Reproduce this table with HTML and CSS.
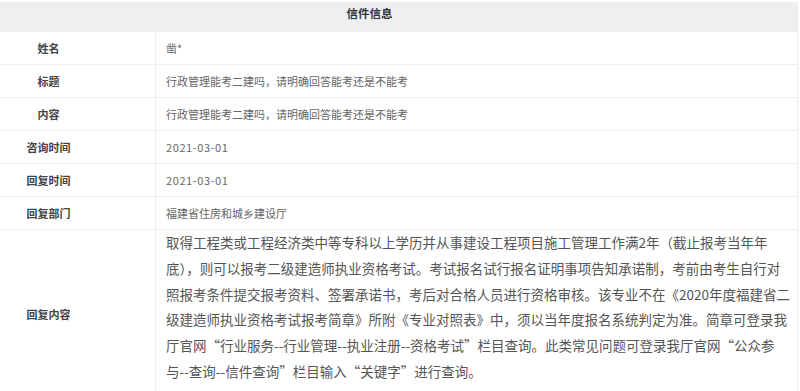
FILE: index.html
```html
<!DOCTYPE html>
<html lang="zh-CN">
<head>
<meta charset="utf-8">
<title>信件信息</title>
<link rel="stylesheet" href="styles.css">
</head>
<body>
<div class="sheet">
  <div class="head">信件信息</div>
  <div class="row"><div class="label">姓名</div><div class="value">凿*</div></div>
  <div class="row"><div class="label">标题</div><div class="value">行政管理能考二建吗，请明确回答能考还是不能考</div></div>
  <div class="row"><div class="label">内容</div><div class="value">行政管理能考二建吗，请明确回答能考还是不能考</div></div>
  <div class="row"><div class="label">咨询时间</div><div class="value date">2021-03-01</div></div>
  <div class="row"><div class="label">回复时间</div><div class="value date">2021-03-01</div></div>
  <div class="row"><div class="label">回复部门</div><div class="value">福建省住房和城乡建设厅</div></div>
  <div class="row reply"><div class="label">回复内容</div><div class="value long">取得工程类或工程经济类中等专科以上学历并从事建设工程项目施工管理工作满2年（截止报考当年年底），则可以报考二级建造师执业资格考试。考试报名试行报名证明事项告知承诺制，考前由考生自行对照报考条件提交报考资料、签署承诺书，考后对合格人员进行资格审核。该专业不在《2020年度福建省二级建造师执业资格考试报考简章》所附《专业对照表》中，须以当年度报名系统判定为准。简章可登录我厅官网“行业服务--行业管理--执业注册--资格考试”栏目查询。此类常见问题可登录我厅官网“公众参与--查询--信件查询”栏目输入“关键字”进行查询。</div></div>
</div>
</body>
</html>
```

FILE: styles.css
```css
html, body {
  margin: 0;
  padding: 0;
  background: #fff;
}
body {
  font-family: "Noto Sans CJK SC", "Noto Sans", sans-serif;
  color: #666;
  overflow: hidden;
}
.sheet {
  margin: 2px 0 0 -59px;
  width: 855px;
  border: 1px solid #ececec;
  border-bottom: none;
}
.head {
  height: 20px;
  line-height: 20px;
  padding-bottom: 8px;
  background: #efefef;
  text-align: center;
  font-size: 11.5px;
  font-weight: bold;
  color: #333;
}
.row {
  display: grid;
  grid-template-columns: 214px 1fr;
  height: 33px;
  border-top: 1px solid #ededed;
  box-sizing: border-box;
}
.label {
  display: flex;
  align-items: center;
  justify-content: center;
  font-size: 11px;
  font-weight: 600;
  color: #444;
  border-right: 1px solid #ededed;
}
.value {
  display: flex;
  align-items: center;
  padding-left: 10px;
  font-size: 11px;
  color: #666;
}
.value.date {
  letter-spacing: 0.6px;
}
.row.reply {
  height: 168px;
}
.value.long {
  display: block;
  padding: 0 6px 0 10px;
  font-size: 13.5px;
  line-height: 25.8px;
  color: #555;
}
```
